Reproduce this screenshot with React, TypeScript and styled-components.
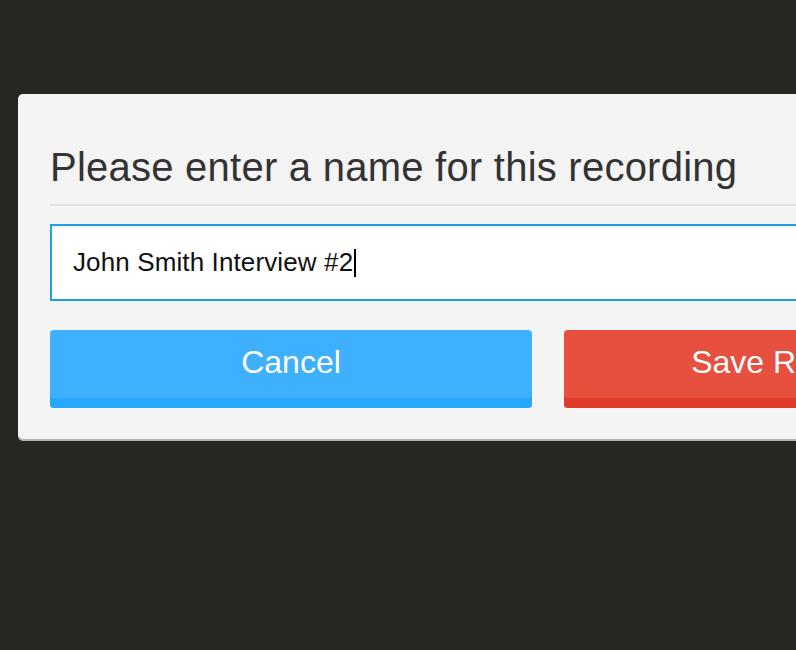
import React from "react";
import styled, { createGlobalStyle } from "styled-components";

const Global = createGlobalStyle`
  html, body {
    margin: 0;
    padding: 0;
    background: #282823;
    overflow: hidden;
  }
  body {
    font-family: "Liberation Sans", Arial, Helvetica, sans-serif;
  }
`;

const Page = styled.div`
  width: 796px;
  height: 650px;
  overflow: hidden;
  padding: 94px 0 0 18px;
  box-sizing: border-box;
  background: #282823;
`;

const Card = styled.div`
  width: 1060px;
  box-sizing: border-box;
  background: #f4f4f4;
  border-radius: 5px;
  box-shadow: 0 2px 0 #b4b4b4;
  padding: 49px 32px 31px 32px;
  display: flex;
  flex-direction: column;
`;

const Title = styled.h1`
  margin: 0;
  font-size: 40px;
  line-height: 48px;
  font-weight: 400;
  color: #333333;
  letter-spacing: 0.24px;
`;

const Divider = styled.div`
  height: 2px;
  background: #e2e2e2;
  margin-top: 13px;
`;

const Field = styled.div`
  margin-top: 18px;
  height: 77px;
  box-sizing: border-box;
  border: 2px solid #1ea0e7;
  background: #ffffff;
  box-shadow: inset 0 1px 3px rgba(0, 0, 0, 0.06);
  padding: 0 21px;
  display: flex;
  align-items: center;
  font-size: 26px;
  letter-spacing: 0.12px;
  color: #111111;
`;

const Caret = styled.span`
  display: inline-block;
  width: 2px;
  height: 28px;
  background: #000;
  margin-left: 1px;
  vertical-align: middle;
`;

const Actions = styled.div`
  margin-top: 29px;
  display: grid;
  grid-template-columns: 1fr 1fr;
  gap: 32px;
`;

const Button = styled.button<{ $tone: "blue" | "red" }>`
  height: 78px;
  border: none;
  border-radius: 4px;
  padding: 0 0 14px 0;
  margin: 0;
  font-family: "Liberation Sans", Arial, Helvetica, sans-serif;
  font-size: 32px;
  color: #ffffff;
  background: ${(p) => (p.$tone === "blue" ? "#3fb0fe" : "#e74f3f")};
  box-shadow: inset 0 -10px 0
    ${(p) => (p.$tone === "blue" ? "#27a7fe" : "#e03a28")};
  cursor: pointer;
`;

export default function App() {
  return (
    <>
      <Global />
      <Page>
        <Card>
          <Title>Please enter a name for this recording</Title>
          <Divider />
          <Field>
            John Smith Interview #2
            <Caret />
          </Field>
          <Actions>
            <Button $tone="blue">Cancel</Button>
            <Button $tone="red">Save Recording</Button>
          </Actions>
        </Card>
      </Page>
    </>
  );
}
